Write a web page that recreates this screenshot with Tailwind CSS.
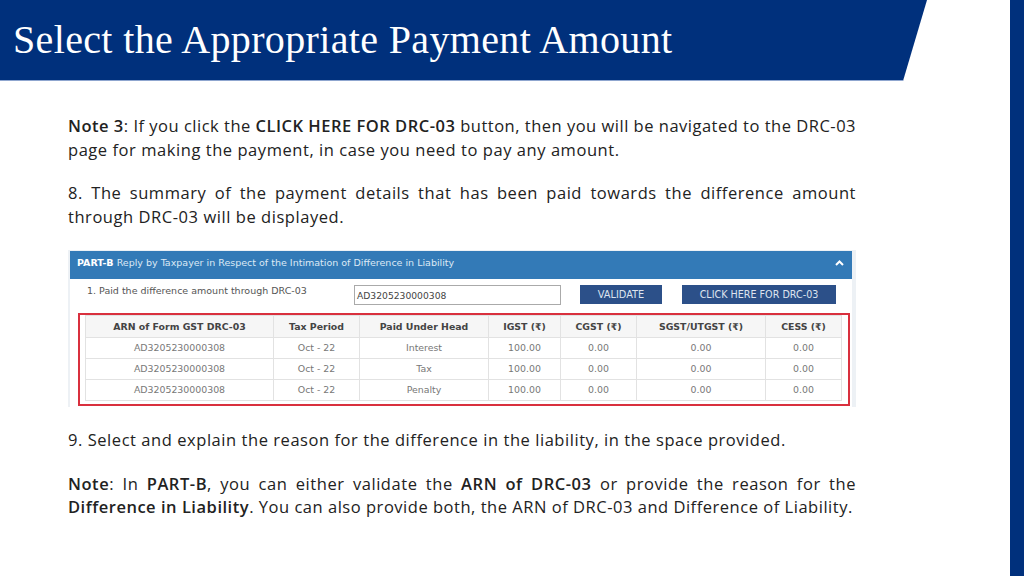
<!DOCTYPE html>
<html lang="en">

<head>
    <meta charset="UTF-8" />
    <meta name="viewport" content="width=device-width, initial-scale=1.0" />
    <title>Select the Appropriate Payment Amount</title>
    <script src="https://cdn.jsdelivr.net/npm/@tailwindcss/browser@4"></script>
</head>

<body class="bg-white overflow-hidden">
    <div class="flex h-[576px] w-[1024px]">
        <div class="w-[1010px]">
            <!-- Title banner -->
            <header class="h-[81px] w-[927px] bg-[#00307c] border-b border-[#8fa6cf] [clip-path:polygon(0_0,100%_0,903px_100%,0_100%)] flex items-center pl-[13px] pb-[1px]">
                <h1 class="text-white text-[40px] leading-none font-['Liberation_Serif',serif] tracking-[0.35px] whitespace-nowrap">Select the Appropriate Payment Amount</h1>
            </header>

            <main class="ml-[68px] w-[788px] pt-[33px] font-['Open_Sans',sans-serif] text-[16.5px] tracking-[0.55px] leading-[24px] text-[#222]">
                <!-- Note 3 -->
                <p class="tracking-[0.5px] [text-align-last:justify] whitespace-nowrap"><b class="font-semibold">Note 3</b>: If you click the <b class="font-semibold">CLICK HERE FOR DRC-03</b> button, then you will be navigated to the DRC-03</p>
                <p>page for making the payment, in case you need to pay any amount.</p>

                <p class="mt-[19px] [text-align-last:justify] whitespace-nowrap">8. The summary of the payment details that has been paid towards the difference amount</p>
                <p>through DRC-03 will be displayed.</p>

                <!-- Portal screenshot -->
                <section class="mt-[21px] h-[157px] w-[788px] bg-[#edf1f5] pl-[2px] pr-[4px] pt-[1px] font-['DejaVu_Sans',sans-serif] text-[#555] tracking-normal">
                    <div class="h-full bg-white">
                        <div class="h-[28px] bg-[#337ab7] flex items-center justify-between pl-[7px] pr-[8px] pb-[5px] text-[9.5px] leading-none text-[#dce9f5]">
                            <span><b class="font-bold text-white">PART-B</b> Reply by Taxpayer in Respect of the Intimation of Difference in Liability</span>
                            <svg width="9" height="6" viewBox="0 0 9 6"><path d="M1 5 L4.5 1.5 L8 5" fill="none" stroke="#fff" stroke-width="2" /></svg>
                        </div>
                        <div class="flex h-[34px] pt-[6px] text-[9.5px]">
                            <span class="ml-[17px] w-[267px] leading-[12px]">1. Paid the difference amount through DRC-03</span>
                            <div class="w-[207px] h-[20px] border border-[#aaa] pl-[2px] leading-[20px] text-[9.2px] text-[#444]">AD3205230000308</div>
                            <div class="ml-[19px] w-[82px] h-[19px] bg-[#2c5089] text-[#dde4ef] text-center leading-[19px] text-[9.8px]">VALIDATE</div>
                            <div class="ml-[20px] w-[154px] h-[19px] bg-[#2c5089] text-[#dde4ef] text-center leading-[19px] text-[9.6px]">CLICK HERE FOR DRC-03</div>
                        </div>
                        <div class="ml-[8px] w-[772px] h-[93px] border-2 border-[#d9303e] pl-[5px]">
                            <table class="w-[756px] table-fixed border-collapse text-center text-[9.4px] leading-none text-[#777]">
                                <colgroup>
                                    <col class="w-[188px]" />
                                    <col class="w-[86px]" />
                                    <col class="w-[129px]" />
                                    <col class="w-[72px]" />
                                    <col class="w-[76px]" />
                                    <col class="w-[129px]" />
                                    <col class="w-[76px]" />
                                </colgroup>
                                <thead>
                                    <tr class="h-[22px] bg-[#f6f6f6] text-[#444] font-bold">
                                        <th class="border border-[#e2e2e2]">ARN of Form GST DRC-03</th>
                                        <th class="border border-[#e2e2e2]">Tax Period</th>
                                        <th class="border border-[#e2e2e2]">Paid Under Head</th>
                                        <th class="border border-[#e2e2e2]">IGST (₹)</th>
                                        <th class="border border-[#e2e2e2]">CGST (₹)</th>
                                        <th class="border border-[#e2e2e2]">SGST/UTGST (₹)</th>
                                        <th class="border border-[#e2e2e2]">CESS (₹)</th>
                                    </tr>
                                </thead>
                                <tbody>
                                    <tr class="h-[21px]">
                                        <td class="border border-[#e2e2e2]">AD3205230000308</td>
                                        <td class="border border-[#e2e2e2]">Oct - 22</td>
                                        <td class="border border-[#e2e2e2]">Interest</td>
                                        <td class="border border-[#e2e2e2]">100.00</td>
                                        <td class="border border-[#e2e2e2]">0.00</td>
                                        <td class="border border-[#e2e2e2]">0.00</td>
                                        <td class="border border-[#e2e2e2]">0.00</td>
                                    </tr>
                                    <tr class="h-[21px]">
                                        <td class="border border-[#e2e2e2]">AD3205230000308</td>
                                        <td class="border border-[#e2e2e2]">Oct - 22</td>
                                        <td class="border border-[#e2e2e2]">Tax</td>
                                        <td class="border border-[#e2e2e2]">100.00</td>
                                        <td class="border border-[#e2e2e2]">0.00</td>
                                        <td class="border border-[#e2e2e2]">0.00</td>
                                        <td class="border border-[#e2e2e2]">0.00</td>
                                    </tr>
                                    <tr class="h-[21px]">
                                        <td class="border border-[#e2e2e2]">AD3205230000308</td>
                                        <td class="border border-[#e2e2e2]">Oct - 22</td>
                                        <td class="border border-[#e2e2e2]">Penalty</td>
                                        <td class="border border-[#e2e2e2]">100.00</td>
                                        <td class="border border-[#e2e2e2]">0.00</td>
                                        <td class="border border-[#e2e2e2]">0.00</td>
                                        <td class="border border-[#e2e2e2]">0.00</td>
                                    </tr>
                                </tbody>
                            </table>
                        </div>
                    </div>
                </section>

                <p class="mt-[21px]">9. Select and explain the reason for the difference in the liability, in the space provided.</p>

                <p class="mt-[20px] [text-align-last:justify] whitespace-nowrap"><b class="font-semibold">Note</b>: In <b class="font-semibold">PART-B</b>, you can either validate the <b class="font-semibold">ARN of DRC-03</b> or provide the reason for the</p>
                <p class="-mt-[1px] tracking-[0.52px]"><b class="font-semibold">Difference in Liability</b>. You can also provide both, the ARN of DRC-03 and Difference of Liability.</p>
            </main>
        </div>
        <!-- Slide edge -->
        <div class="w-[14px] bg-[#00307c]"></div>
    </div>
</body>

</html>
